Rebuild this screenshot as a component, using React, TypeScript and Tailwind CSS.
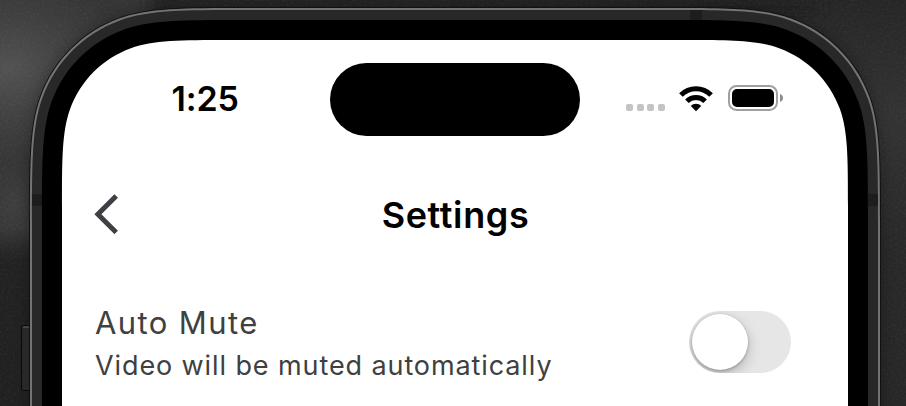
import React from "react";

// Continuous-curvature top corners; the sides run past the bottom of the view.
function shell(left: number, right: number, top: number, r: number): string {
  const a = 1.52866 * r;
  const b = 1.08849 * r;
  const c = 0.837 * r;
  const f = 0.63149 * r;
  const g = 0.07491 * r;
  const h = 0.37282 * r;
  const i = 0.16906 * r;
  const L = (n: number) => left + n;
  const R = (n: number) => right - n;
  const T = (n: number) => top + n;
  return [
    `M${left} 460 V${T(a)}`,
    `C${left} ${T(b)} ${left} ${T(c)} ${L(g)} ${T(f)}`,
    `C${L(i)} ${T(h)} ${L(h)} ${T(i)} ${L(f)} ${T(g)}`,
    `C${L(c)} ${top} ${L(b)} ${top} ${L(a)} ${top}`,
    `H${R(a)}`,
    `C${R(b)} ${top} ${R(c)} ${top} ${R(f)} ${T(g)}`,
    `C${R(h)} ${T(i)} ${R(i)} ${T(h)} ${R(g)} ${T(f)}`,
    `C${right} ${T(c)} ${right} ${T(b)} ${right} ${T(a)}`,
    "V460 Z",
  ].join(" ");
}

function PhoneArtwork() {
  return (
    <svg className="absolute inset-0" width="906" height="406" viewBox="0 0 906 406" aria-hidden="true">
      <defs>
        <linearGradient id="wall" x1="0" y1="0" x2="0" y2="1">
          <stop offset="0" stopColor="#353535" />
          <stop offset="0.56" stopColor="#363636" />
          <stop offset="0.64" stopColor="#222222" />
          <stop offset="1" stopColor="#202020" />
        </linearGradient>
        <linearGradient id="wallRight" x1="0" y1="0" x2="0" y2="1">
          <stop offset="0" stopColor="#262626" />
          <stop offset="0.28" stopColor="#333333" />
          <stop offset="0.6" stopColor="#292929" />
          <stop offset="1" stopColor="#272727" />
        </linearGradient>
        <radialGradient id="glow">
          <stop offset="0" stopColor="#666666" stopOpacity="0.6" />
          <stop offset="1" stopColor="#555555" stopOpacity="0" />
        </radialGradient>
        <filter id="soft" x="-20%" y="-20%" width="140%" height="140%">
          <feGaussianBlur stdDeviation="7" />
        </filter>
        <filter id="grain" x="0" y="0" width="100%" height="100%">
          <feTurbulence type="fractalNoise" baseFrequency="0.45" numOctaves="2" />
          <feColorMatrix values="0 0 0 0 1  0 0 0 0 1  0 0 0 0 1  0.3 0 0 0 -0.13" />
        </filter>
      </defs>
      <rect width="906" height="406" fill="url(#wall)" />
      <rect x="450" width="456" height="406" fill="url(#wallRight)" />
      <rect x="150" y="-10" width="670" height="24" fill="#202020" filter="url(#soft)" />
      <ellipse cx="8" cy="68" rx="125" ry="95" fill="url(#glow)" />
      <ellipse cx="14" cy="205" rx="34" ry="45" fill="url(#glow)" opacity="0.3" />
      <rect width="906" height="406" filter="url(#grain)" opacity="0.35" />
      <path d={shell(29, 881, 7, 142)} fill="#000000" opacity="0.3" filter="url(#soft)" />
      <rect x="21.5" y="325.5" width="14" height="65" rx="2" fill="#282828" stroke="#090909" />
      <path d="M23 327H31" stroke="#606060" />
      <path d={shell(29, 881, 7, 142)} fill="#111111" />
      <path d={shell(30, 880, 8, 141)} fill="#747474" />
      <path d={shell(32, 878, 10, 139)} fill="#282828" />
      <path d="M32 194H42V206H32Z M868 194H878V206H868Z M690 10H702V20H690Z" fill="#1d1d1d" />
      <path d={shell(42, 868, 20, 129)} fill="#000000" />
      <path d={shell(62, 848, 40, 109)} fill="#ffffff" />
    </svg>
  );
}

function Wifi() {
  return (
    <svg className="block" width="34" height="26" viewBox="0 0 34 26" aria-hidden="true">
      <path
        d="M1.9 9.1C10.3 0.7 23.7 0.7 32.1 9.1M7.9 15.2C13 10.2 21 10.2 26.1 15.2"
        fill="none"
        stroke="#000"
        strokeWidth="5"
      />
      <path d="M11.8 20.1C14.6 17 19.4 17 22.2 20.1L17 25.2Z" fill="#000" />
    </svg>
  );
}

function StatusBar() {
  return (
    <div className="flex h-[74px] items-center">
      <div className="w-[268px] pl-[109.5px] text-[34px] leading-[74px] font-semibold tracking-[-0.1px]">1:25</div>
      <div className="h-[73px] w-[250px] rounded-full bg-black" />
      <div className="flex h-[26px] items-center pl-[46px]">
        <div className="mt-[16.5px] flex gap-[3.7px]">
          <i className="size-[7px] rounded-[2px] bg-[#c4c4c4]" />
          <i className="size-[7px] rounded-[2px] bg-[#c4c4c4]" />
          <i className="size-[7px] rounded-[2px] bg-[#c4c4c4]" />
          <i className="size-[7px] rounded-[2px] bg-[#c4c4c4]" />
        </div>
        <div className="ml-[14px]">
          <Wifi />
        </div>
        <div className="-mt-[2px] ml-[15px] flex h-[26px] w-[50px] items-center justify-center rounded-[8.5px] border-2 border-[#a0a0a0]">
          <div className="h-[18px] w-[42px] rounded-[5px] bg-black" />
        </div>
        <svg className="-mt-[2px] ml-[2px] block" width="3" height="8" viewBox="0 0 3 8" aria-hidden="true">
          <path d="M0 0Q3 1.2 3 4T0 8Z" fill="#8c8c8c" />
        </svg>
      </div>
    </div>
  );
}

function Toggle() {
  return (
    <button
      role="switch"
      aria-checked="false"
      aria-label="Auto Mute"
      className="flex h-[62px] w-[102px] items-center overflow-hidden rounded-full bg-[#e6e6e6] pl-[3px]"
    >
      <span className="size-[56px] rounded-full bg-white shadow-[0_5px_14px_rgba(0,0,0,0.22),0_1px_3px_rgba(0,0,0,0.28)]" />
    </button>
  );
}

export default function App() {
  return (
    <main className="relative h-[406px] w-[906px] overflow-hidden font-['Inter','Liberation_Sans',sans-serif] text-black">
      <PhoneArtwork />
      <div className="relative mx-[62px] w-[786px] pt-[62px]">
        <StatusBar />
        <header className="mt-[53px] flex h-[50px] items-center">
          <button aria-label="Back" className="ml-[32px] flex w-[128px]">
            <svg width="26" height="40" viewBox="0 0 26 40" aria-hidden="true">
              <path d="M22.2 2L3.9 20.2L22.2 38.4" fill="none" stroke="#403f46" strokeWidth="5" />
            </svg>
          </button>
          <h1 className="w-[467px] pt-px text-center text-[36px] leading-[50px] font-semibold tracking-[0.6px]">Settings</h1>
        </header>
        <section className="mt-[64px] flex items-start justify-between pr-[57px] pl-[33px]">
          <div className="text-[#404040]">
            <h2 className="text-[31px] leading-[40px] tracking-[1.4px]">Auto Mute</h2>
            <p className="mt-[5px] text-[27px] leading-[36px] tracking-[0.9px]">Video will be muted automatically</p>
          </div>
          <div className="pt-[8px]">
            <Toggle />
          </div>
        </section>
      </div>
    </main>
  );
}
